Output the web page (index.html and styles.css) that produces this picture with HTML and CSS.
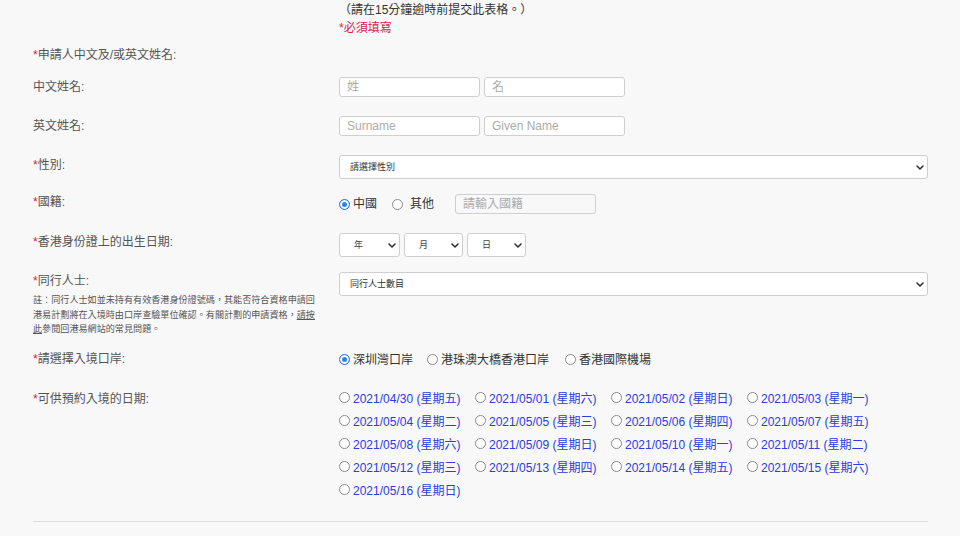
FILE: index.html
```html
<!DOCTYPE html>
<html lang="zh-Hant">
<head>
<meta charset="utf-8">
<title>申請表格</title>
<link rel="stylesheet" href="styles.css">
</head>
<body>
<div class="form">
  <div class="row top">
    <div></div>
    <div class="notice">
      <div class="timeout">（請在15分鐘逾時前提交此表格。）</div>
      <div class="required">*必須填寫</div>
    </div>
  </div>

  <div class="row r-header">
    <div class="label"><span class="star">*</span>申請人中文及/或英文姓名:</div>
    <div></div>
  </div>

  <div class="row r-cname">
    <div class="label">中文姓名:</div>
    <div class="field inputs">
      <input class="text" type="text" placeholder="姓">
      <input class="text" type="text" placeholder="名">
    </div>
  </div>

  <div class="row r-ename">
    <div class="label">英文姓名:</div>
    <div class="field inputs">
      <input class="text" type="text" placeholder="Surname">
      <input class="text" type="text" placeholder="Given Name">
    </div>
  </div>

  <div class="row r-gender">
    <div class="label"><span class="star">*</span>性別:</div>
    <div class="field">
      <div class="select-wrap full">
        <select class="sel"><option>請選擇性別</option></select>
        <svg class="chev" width="8" height="5" viewBox="0 0 8 5"><path d="M1 1 L4 4 L7 1" fill="none" stroke="#333" stroke-width="1.6" stroke-linecap="round" stroke-linejoin="round"/></svg>
      </div>
    </div>
  </div>

  <div class="row r-nation">
    <div class="label"><span class="star">*</span>國籍:</div>
    <div class="field radios nation">
      <label class="opt"><input type="radio" name="nat" class="radio" checked><span>中國</span></label>
      <label class="opt other"><input type="radio" name="nat" class="radio"><span>其他</span></label>
      <input class="text plain" type="text" placeholder="請輸入國籍">
    </div>
  </div>

  <div class="row r-dob">
    <div class="label"><span class="star">*</span>香港身份證上的出生日期:</div>
    <div class="field dob">
      <div class="select-wrap y">
        <select class="sel small"><option>年</option></select>
        <svg class="chev" width="8" height="5" viewBox="0 0 8 5"><path d="M1 1 L4 4 L7 1" fill="none" stroke="#333" stroke-width="1.6" stroke-linecap="round" stroke-linejoin="round"/></svg>
      </div>
      <div class="select-wrap m">
        <select class="sel small"><option>月</option></select>
        <svg class="chev" width="8" height="5" viewBox="0 0 8 5"><path d="M1 1 L4 4 L7 1" fill="none" stroke="#333" stroke-width="1.6" stroke-linecap="round" stroke-linejoin="round"/></svg>
      </div>
      <div class="select-wrap m">
        <select class="sel small"><option>日</option></select>
        <svg class="chev" width="8" height="5" viewBox="0 0 8 5"><path d="M1 1 L4 4 L7 1" fill="none" stroke="#333" stroke-width="1.6" stroke-linecap="round" stroke-linejoin="round"/></svg>
      </div>
    </div>
  </div>

  <div class="row r-comp">
    <div class="label-block">
      <div class="label"><span class="star">*</span>同行人士:</div>
      <div class="note">註：同行人士如並未持有有效香港身份證號碼，其能否符合資格申請回<br>港易計劃將在入境時由口岸查驗單位確認。有關計劃的申請資格，<a href="#" class="link">請按<br>此</a>參閱回港易網站的常見問題。</div>
    </div>
    <div class="field">
      <div class="select-wrap full">
        <select class="sel"><option>同行人士數目</option></select>
        <svg class="chev" width="8" height="5" viewBox="0 0 8 5"><path d="M1 1 L4 4 L7 1" fill="none" stroke="#333" stroke-width="1.6" stroke-linecap="round" stroke-linejoin="round"/></svg>
      </div>
    </div>
  </div>

  <div class="row r-port">
    <div class="label"><span class="star">*</span>請選擇入境口岸:</div>
    <div class="field radios port">
      <label class="opt"><input type="radio" name="port" class="radio" checked><span>深圳灣口岸</span></label>
      <label class="opt"><input type="radio" name="port" class="radio"><span>港珠澳大橋香港口岸</span></label>
      <label class="opt"><input type="radio" name="port" class="radio"><span>香港國際機場</span></label>
    </div>
  </div>

  <div class="row r-dates">
    <div class="label"><span class="star">*</span>可供預約入境的日期:</div>
    <div class="field dates">
      <label class="date"><input type="radio" name="d" class="radio"><span>2021/04/30 (星期五)</span></label>
      <label class="date"><input type="radio" name="d" class="radio"><span>2021/05/01 (星期六)</span></label>
      <label class="date"><input type="radio" name="d" class="radio"><span>2021/05/02 (星期日)</span></label>
      <label class="date"><input type="radio" name="d" class="radio"><span>2021/05/03 (星期一)</span></label>
      <label class="date"><input type="radio" name="d" class="radio"><span>2021/05/04 (星期二)</span></label>
      <label class="date"><input type="radio" name="d" class="radio"><span>2021/05/05 (星期三)</span></label>
      <label class="date"><input type="radio" name="d" class="radio"><span>2021/05/06 (星期四)</span></label>
      <label class="date"><input type="radio" name="d" class="radio"><span>2021/05/07 (星期五)</span></label>
      <label class="date"><input type="radio" name="d" class="radio"><span>2021/05/08 (星期六)</span></label>
      <label class="date"><input type="radio" name="d" class="radio"><span>2021/05/09 (星期日)</span></label>
      <label class="date"><input type="radio" name="d" class="radio"><span>2021/05/10 (星期一)</span></label>
      <label class="date"><input type="radio" name="d" class="radio"><span>2021/05/11 (星期二)</span></label>
      <label class="date"><input type="radio" name="d" class="radio"><span>2021/05/12 (星期三)</span></label>
      <label class="date"><input type="radio" name="d" class="radio"><span>2021/05/13 (星期四)</span></label>
      <label class="date"><input type="radio" name="d" class="radio"><span>2021/05/14 (星期五)</span></label>
      <label class="date"><input type="radio" name="d" class="radio"><span>2021/05/15 (星期六)</span></label>
      <label class="date"><input type="radio" name="d" class="radio"><span>2021/05/16 (星期日)</span></label>
    </div>
  </div>

  <hr class="divider">
</div>
</body>
</html>
```
FILE: styles.css
```css
* { box-sizing: border-box; }

html, body {
  margin: 0;
  padding: 0;
  background: #f8f8f8;
}

body {
  font-family: "Liberation Sans", "Noto Sans CJK TC", sans-serif;
  font-size: 12px;
  color: #333;
  overflow: hidden;
}

.form {
  padding: 1px 32px 0 33px;
}

.row {
  display: grid;
  grid-template-columns: 306px 589px;
  align-items: start;
}

.label {
  line-height: 18px;
  color: #555;
  white-space: nowrap;
}

.star { color: #d9214e; }

.notice { line-height: 18px; }
.timeout { color: #333; }
.required { color: #d9214e; }

.r-header { margin-top: 9px; }
.r-cname { margin-top: 13px; }
.r-ename { margin-top: 19px; }
.r-gender { margin-top: 19px; }
.r-nation { margin-top: 14px; }
.r-dob { margin-top: 19px; }
.r-comp { margin-top: 15px; }
.r-port { margin-top: 13px; }
.r-dates { margin-top: 18px; }

.r-cname .label, .r-ename .label { line-height: 20px; }
.r-gender .label { margin-top: 1px; }
.r-nation .field { margin-top: 1px; }
.r-dates .label { line-height: 22px; }

.inputs {
  display: flex;
  gap: 4px;
}

.text {
  width: 141px;
  height: 20px;
  border: 1px solid #cfcfcf;
  border-radius: 3px;
  background: #fff;
  padding: 0 7px;
  font-family: "Liberation Sans", "Noto Sans CJK TC", sans-serif;
  font-size: 12px;
  color: #333;
  outline: none;
}
.text::placeholder { color: #ababab; }
.text.plain { background: #f8f8f8; }

.select-wrap {
  position: relative;
  height: 24px;
}
.select-wrap.full { width: 589px; }
.select-wrap.y { width: 61px; }
.select-wrap.m { width: 59px; }

.sel {
  -webkit-appearance: none;
  appearance: none;
  width: 100%;
  height: 24px;
  border: 1px solid #cfcfcf;
  border-radius: 3px;
  background: #fff;
  padding: 0 10px;
  font-family: "Liberation Sans", "Noto Sans CJK TC", sans-serif;
  font-size: 9px;
  color: #333;
  outline: none;
}
.sel.small { padding-left: 14px; color: #444; }

.chev {
  position: absolute;
  right: 4px;
  top: 10px;
}

.dob {
  display: flex;
  gap: 4px;
}

.radios {
  display: flex;
  align-items: center;
  height: 20px;
}

.opt {
  display: flex;
  align-items: center;
  color: #333;
  line-height: 18px;
}

.radio {
  -webkit-appearance: none;
  appearance: none;
  width: 11px;
  height: 11px;
  margin: 0 3px 0 0;
  border: 1px solid #8a8a8a;
  border-radius: 50%;
  background: #fff;
  flex: none;
}
.radio:checked {
  border-color: #2f7ff2;
  background: #2f7ff2;
  box-shadow: inset 0 0 0 2px #fff;
}

.nation .opt { margin-right: 15px; }
.nation .opt.other .radio { margin-right: 7px; }
.nation .opt.other { margin-right: 21px; }

.port .opt { margin-right: 14px; }
.port .opt:nth-child(2) { margin-right: 16px; }

.label-block { display: flex; flex-direction: column; }
.r-comp .label { line-height: 18px; }

.note {
  margin-top: 3px;
  font-size: 9.1px;
  line-height: 14.5px;
  color: #555;
  white-space: nowrap;
}
.link { color: #555; text-decoration: underline; }

.dates {
  display: grid;
  grid-template-columns: repeat(4, 136px);
  grid-auto-rows: 23px;
  margin-top: -2px;
}

.date {
  display: flex;
  align-items: center;
  color: #2a3ce2;
  white-space: nowrap;
}
.date .radio { margin-right: 3px; }

.divider {
  margin: 20px 0 0 0;
  width: 895px;
  border: 0;
  border-top: 1px solid #dddddd;
  height: 0;
}
```
